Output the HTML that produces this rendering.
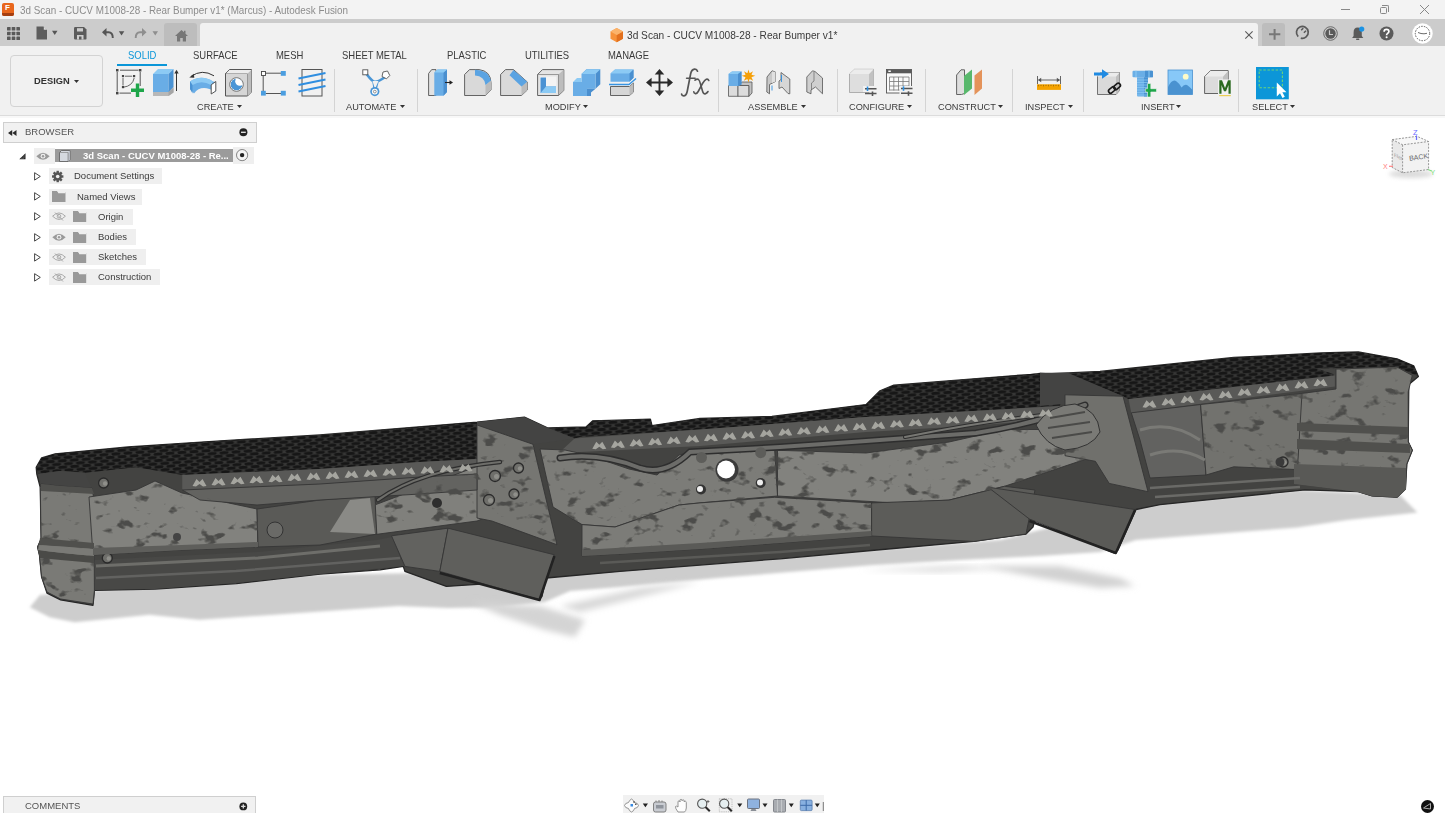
<!DOCTYPE html>
<html><head><meta charset="utf-8">
<style>
*{margin:0;padding:0;box-sizing:border-box}
html,body{width:1445px;height:813px;overflow:hidden;background:#fff;font-family:"Liberation Sans",sans-serif}
.a{position:absolute}
.t{position:absolute;white-space:nowrap;line-height:1}
.rl{font-size:9.8px;color:#3a3a3a;transform:scaleX(0.94);transform-origin:0 0}
.tb{font-size:10.5px;color:#3a3a3a;transform:scaleX(0.9);transform-origin:0 0}
.sep{position:absolute;width:1px;background:#d4d4d4;top:69px;height:43px}
.dd{display:inline-block;width:0;height:0;border-left:2.5px solid transparent;border-right:2.5px solid transparent;border-top:3px solid #333;vertical-align:middle;margin-left:3px;position:relative;top:-1px}
.br{font-size:9.8px;color:#3a3a3a;transform:scaleX(0.97);transform-origin:0 0}
.rowbg{position:absolute;background:#efefef;height:16px}
svg{position:absolute;overflow:visible}
</style></head><body>
<!-- title bar -->
<div class="a" style="left:0;top:0;width:1445px;height:19px;background:#f3f3f3"></div>
<div class="a" style="left:2px;top:3px;width:12px;height:13px;background:#e8661c;border-radius:2px"></div>
<div class="a" style="left:2px;top:13px;width:12px;height:3px;background:#a53e10;border-radius:0 0 2px 2px"></div>
<div class="t" style="left:5px;top:4px;font-size:8px;font-weight:bold;color:#fff">F</div>
<div class="t" style="left:19.5px;top:4.9px;font-size:10.5px;color:#8c8c8c;transform:scaleX(0.94);transform-origin:0 0">3d Scan - CUCV M1008-28 - Rear Bumper v1* (Marcus) - Autodesk Fusion</div>
<div class="a" style="left:1341px;top:9px;width:9px;height:1px;background:#888"></div>
<div class="a" style="left:1380px;top:7px;width:7px;height:7px;border:1px solid #888;border-radius:1.5px"></div>
<div class="a" style="left:1382px;top:5px;width:7px;height:7px;border-top:1px solid #888;border-right:1px solid #888;border-radius:0 2px 0 0"></div>
<svg style="left:1420px;top:5px" width="9" height="9"><path d="M0 0L9 9M9 0L0 9" stroke="#888" stroke-width="1"/></svg>

<!-- app bar -->
<div class="a" style="left:0;top:19px;width:1445px;height:27px;background:#cccccc"></div>
<div class="a" style="left:163.5px;top:23px;width:33px;height:23px;background:#bdbdbd;border-radius:3px 3px 0 0"></div>
<div class="a" style="left:200px;top:22.5px;width:1058px;height:24px;background:#f1f1f1;border-radius:3px 3px 0 0"></div>
<div class="a" style="left:1262px;top:22.5px;width:23px;height:23.5px;background:#bdbdbd;border-radius:3px 3px 0 0"></div>

<!-- app bar icons -->
<svg style="left:7px;top:26.5px" width="13" height="13"><g fill="#595959"><rect x="0" y="0" width="3.6" height="3.6" rx=".6"/><rect x="4.7" y="0" width="3.6" height="3.6" rx=".6"/><rect x="9.4" y="0" width="3.6" height="3.6" rx=".6"/><rect x="0" y="4.7" width="3.6" height="3.6" rx=".6"/><rect x="4.7" y="4.7" width="3.6" height="3.6" rx=".6"/><rect x="9.4" y="4.7" width="3.6" height="3.6" rx=".6"/><rect x="0" y="9.4" width="3.6" height="3.6" rx=".6"/><rect x="4.7" y="9.4" width="3.6" height="3.6" rx=".6"/><rect x="9.4" y="9.4" width="3.6" height="3.6" rx=".6"/></g></svg>
<svg style="left:36px;top:26px" width="22" height="14"><path d="M0.5 0.5H7.5L11 4V13.5H0.5Z" fill="#5e5e5e"/><path d="M7.8 0.6V3.7H10.9" fill="#ddd"/><path d="M16 4.7H21.5L18.75 9Z" fill="#555"/></svg>
<svg style="left:73.5px;top:26.5px" width="13" height="13"><path d="M0 1.2Q0 0 1.2 0H10L12.5 2.5V11.8Q12.5 12.5 11.8 12.5H1.2Q0 12.5 0 11.3Z" fill="#5b5b5b"/><rect x="3" y="1.2" width="6" height="3.3" fill="#cdcdcd"/><rect x="3" y="8" width="6.5" height="4.5" fill="#cdcdcd"/><rect x="5" y="9.5" width="2.5" height="3" fill="#5b5b5b"/></svg>
<svg style="left:102px;top:27.5px" width="24" height="11"><path d="M1.5 4.2H6.5Q10.8 4.2 10.8 10" fill="none" stroke="#555" stroke-width="1.9"/><path d="M0 4.2L4.5 0V8.4Z" fill="#555"/><path d="M16.8 3.3H22.3L19.55 7.4Z" fill="#555"/></svg>
<svg style="left:134.5px;top:27.5px" width="24" height="11"><path d="M10 4.2H5Q0.7 4.2 0.7 10" fill="none" stroke="#8e8e8e" stroke-width="1.9"/><path d="M11.5 4.2L7 0V8.4Z" fill="#8e8e8e"/><path d="M17.5 3.3H23L20.25 7.4Z" fill="#8e8e8e"/></svg>
<svg style="left:174.5px;top:29.5px" width="14" height="12"><path d="M6.5 0L0 6H2V11.5H5.2V8H7.8V11.5H11V6H13L10.5 3.7V0.8H9V2.3Z" fill="#777"/></svg>
<!-- tab -->
<svg style="left:609.5px;top:28px" width="14" height="15"><path d="M6.7 0L13 3.5V10.8L6.7 14.3L0.5 10.8V3.5Z" fill="#f7923a"/><path d="M6.7 7L13 3.5V10.8L6.7 14.3Z" fill="#e2701e"/><path d="M6.7 0L13 3.5L6.7 7L0.5 3.5Z" fill="#fbb36b"/></svg>
<div class="t" style="left:627.4px;top:29.8px;font-size:10.8px;color:#3a3a3a;transform:scaleX(0.94);transform-origin:0 0">3d Scan - CUCV M1008-28 - Rear Bumper v1*</div>
<svg style="left:1245px;top:31px" width="8" height="8"><path d="M0.3 0.3L7.6 7.6M7.6 0.3L0.3 7.6" stroke="#5a5a5a" stroke-width="1.1"/></svg>
<svg style="left:1268.5px;top:29px" width="12" height="11"><path d="M5.6 0V10.7M0 5.35H11.3" stroke="#777" stroke-width="2"/></svg>
<svg style="left:1295px;top:25px" width="15" height="15"><path d="M3.2 11.6A5.9 5.9 0 1 1 5.8 13.1" fill="none" stroke="#5a5a5a" stroke-width="1.7"/><path d="M6.2 5.2L8.3 3.1M8.9 7.8L11 5.7" stroke="#5a5a5a" stroke-width="1.5"/></svg>
<svg style="left:1322.5px;top:25.5px" width="15" height="15"><circle cx="7.5" cy="7.5" r="6.8" fill="none" stroke="#6a6a6a" stroke-width="1"/><circle cx="7.5" cy="7.5" r="5.2" fill="#5a5a5a"/><path d="M6.5 4.3V8.5H10" fill="none" stroke="#ccc" stroke-width="1.2"/></svg>
<svg style="left:1351px;top:26px" width="15" height="15"><path d="M6.7 1.5Q10.8 1.5 10.8 6.5V10L12.3 12H1.1L2.6 10V6.5Q2.6 1.5 6.7 1.5Z" fill="#5a5a5a"/><rect x="5" y="12.6" width="3.4" height="1.4" rx=".7" fill="#5a5a5a"/><circle cx="10.7" cy="3.1" r="2.6" fill="#1b93e4"/></svg>
<svg style="left:1378.5px;top:25.5px" width="15" height="15"><circle cx="7.5" cy="7.5" r="7" fill="#5a5a5a"/><path d="M5.1 5.7Q5.1 3.4 7.5 3.4Q9.9 3.4 9.9 5.5Q9.9 6.8 8.4 7.6Q7.6 8.1 7.6 9.2" fill="none" stroke="#fff" stroke-width="1.7"/><circle cx="7.6" cy="11.3" r="1.05" fill="#fff"/></svg>
<svg style="left:1411.5px;top:22.5px" width="21" height="21"><circle cx="10.5" cy="10.5" r="10.2" fill="#fff"/><circle cx="10.5" cy="10.5" r="7.2" fill="none" stroke="#333" stroke-width=".8" stroke-dasharray="1.5 1.2"/><path d="M6 9.5L9 10.5L12 10.8L15 10.3" stroke="#444" stroke-width=".8" fill="none"/></svg>

<!-- ribbon -->
<div class="a" style="left:0;top:46px;width:1445px;height:69.5px;background:#f1f1f1"></div>
<div class="a" style="left:0;top:115px;width:1445px;height:1px;background:#dcdcdc"></div>
<div class="a" style="left:0;top:116px;width:1445px;height:2px;background:#f8f8f8"></div>
<div class="a" style="left:10px;top:55px;width:92.5px;height:51.5px;border:1px solid #d3d3d3;border-radius:4px"></div>
<div class="t" style="left:34.3px;top:75.6px;font-size:9.8px;font-weight:bold;color:#333;transform:scaleX(0.95);transform-origin:0 0">DESIGN</div>
<svg style="left:74px;top:79.5px" width="6" height="4"><path d="M0 0H5L2.5 3Z" fill="#333"/></svg>
<div class="t tb" style="left:128px;top:50.2px;color:#0a96d8">SOLID</div>
<div class="a" style="left:117px;top:63.5px;width:49.5px;height:2.5px;background:#0a96d8"></div>
<div class="t tb" style="left:193.3px;top:50.2px">SURFACE</div>
<div class="t tb" style="left:276.3px;top:50.2px">MESH</div>
<div class="t tb" style="left:342.4px;top:50.2px">SHEET METAL</div>
<div class="t tb" style="left:446.5px;top:50.2px">PLASTIC</div>
<div class="t tb" style="left:525.1px;top:50.2px">UTILITIES</div>
<div class="t tb" style="left:607.9px;top:50.2px">MANAGE</div>

<div class="t rl" style="left:196.7px;top:102.2px">CREATE</div><svg style="left:237px;top:105px" width="6" height="4"><path d="M0 0H5L2.5 3Z" fill="#333"/></svg>
<div class="t rl" style="left:346px;top:102.2px">AUTOMATE</div><svg style="left:399.5px;top:105px" width="6" height="4"><path d="M0 0H5L2.5 3Z" fill="#333"/></svg>
<div class="t rl" style="left:544.7px;top:102.2px">MODIFY</div><svg style="left:583px;top:105px" width="6" height="4"><path d="M0 0H5L2.5 3Z" fill="#333"/></svg>
<div class="t rl" style="left:748.1px;top:102.2px">ASSEMBLE</div><svg style="left:800.5px;top:105px" width="6" height="4"><path d="M0 0H5L2.5 3Z" fill="#333"/></svg>
<div class="t rl" style="left:848.7px;top:102.2px">CONFIGURE</div><svg style="left:907px;top:105px" width="6" height="4"><path d="M0 0H5L2.5 3Z" fill="#333"/></svg>
<div class="t rl" style="left:937.6px;top:102.2px">CONSTRUCT</div><svg style="left:998px;top:105px" width="6" height="4"><path d="M0 0H5L2.5 3Z" fill="#333"/></svg>
<div class="t rl" style="left:1025.1px;top:102.2px">INSPECT</div><svg style="left:1068px;top:105px" width="6" height="4"><path d="M0 0H5L2.5 3Z" fill="#333"/></svg>
<div class="t rl" style="left:1140.5px;top:102.2px">INSERT</div><svg style="left:1176px;top:105px" width="6" height="4"><path d="M0 0H5L2.5 3Z" fill="#333"/></svg>
<div class="t rl" style="left:1251.9px;top:102.2px">SELECT</div><svg style="left:1290px;top:105px" width="6" height="4"><path d="M0 0H5L2.5 3Z" fill="#333"/></svg>

<div class="sep" style="left:333.5px"></div><div class="sep" style="left:417px"></div><div class="sep" style="left:718px"></div><div class="sep" style="left:836.5px"></div><div class="sep" style="left:924.5px"></div><div class="sep" style="left:1012px"></div><div class="sep" style="left:1083px"></div><div class="sep" style="left:1238px"></div>

<!-- CREATE icons -->
<svg style="left:116px;top:69px" width="28" height="28">
<g stroke="#555" stroke-width="1" fill="none"><path d="M1.2 3V22.5M4 1.2H22.5M24.2 3V17M3.5 24.1H15"/><path d="M7 9V16.5M9 7.2H16.2M7.5 18.2Q16.5 17 18.2 9" stroke-width="0.9"/></g>
<g fill="#444"><rect x="0" y="0" width="2.5" height="2.5"/><rect x="22.9" y="0" width="2.5" height="2.5"/><rect x="0" y="22.9" width="2.5" height="2.5"/><rect x="5.9" y="6" width="2.2" height="2.2"/><rect x="17" y="6" width="2.2" height="2.2"/><rect x="5.9" y="17" width="2.2" height="2.2"/></g>
<path d="M19.8 14.5H23.2V19.6H28V23H23.2V28H19.8V23H15V19.6H19.8Z" fill="#1ea64a"/>
</svg>
<svg style="left:153px;top:69px" width="26" height="28">
<path d="M0 21.5H15.5L20.5 17.5V23.5L15.5 27H0Z" fill="#b8b8b8"/><path d="M15.5 23L20.5 19V23.5L15.5 27Z" fill="#a5a5a5"/>
<path d="M0 5H15.5L20.5 0H5Z" fill="#8ccaf4"/><path d="M0 5H15.5V23H0Z" fill="#69ade6"/><path d="M15.5 5L20.5 0V18L15.5 23Z" fill="#4a93d4"/>
<path d="M23.5 22V3" stroke="#333" stroke-width="1"/><path d="M21.3 4.5L23.5 0.8L25.7 4.5Z" fill="#333"/>
</svg>
<svg style="left:188.5px;top:69.5px" width="28" height="25">
<path d="M2 6.5Q13 -1.5 25 5.8" fill="none" stroke="#333" stroke-width="1"/><path d="M0.3 7.6L4.8 3.8L5.3 7.8Z" fill="#333"/>
<path d="M1 11.5Q12.5 4 24 11.5L26.5 12V22Q12.5 13.5 5 23.5L1 19Z" fill="#69ade6"/>
<path d="M1 11.5Q12.5 4 24 11.5L22 15Q12.5 9.5 3.5 15Z" fill="#8ccaf4"/>
<path d="M1 11.5L3.5 15V23.5L1 19Z" fill="#4a93d4"/>
<path d="M22.2 14.8L26.8 11.5V21L22.2 24Z" fill="#fff" stroke="#444" stroke-width="0.9"/>
</svg>
<svg style="left:225px;top:69px" width="28" height="28">
<path d="M0.5 4.5L4.5 0.5H26.5V23L22.5 27H0.5Z" fill="#d6d6d6" stroke="#555" stroke-width="1"/>
<path d="M0.5 4.5H22.5V27" fill="none" stroke="#555" stroke-width="0.8"/><path d="M22.5 4.5L26.5 0.5V23L22.5 27Z" fill="#bdbdbd"/><path d="M0.9 4.5L4.5 0.9H26.2L22.5 4.5Z" fill="#ececec"/>
<defs><clipPath id="hc"><circle cx="11.5" cy="15.5" r="5.9"/></clipPath></defs><circle cx="11.5" cy="15.5" r="6.8" fill="#fff" stroke="#666" stroke-width="0.9"/><g clip-path="url(#hc)"><circle cx="11.5" cy="15.5" r="5.9" fill="#4b96d6"/><circle cx="14.8" cy="12.2" r="4.6" fill="#fff"/></g>
</svg>
<svg style="left:261px;top:70.5px" width="26" height="25">
<path d="M4.5 2.2H20M2.2 4.5V20.5M4.5 22.5H20" stroke="#555" stroke-width="1"/>
<rect x="0.5" y="0.5" width="4" height="4" fill="#fff" stroke="#444" stroke-width="0.9"/>
<rect x="19.8" y="0" width="5" height="4.8" fill="#4b9ee0"/><rect x="0" y="19.8" width="4.8" height="4.8" fill="#4b9ee0"/><rect x="19.8" y="19.8" width="5" height="4.8" fill="#4b9ee0"/>
</svg>
<svg style="left:297.5px;top:69px" width="28" height="28">
<rect x="4" y="0.5" width="20" height="26.5" fill="none" stroke="#555" stroke-width="1"/>
<path d="M0.5 9.5L27.5 4M0.5 16L27.5 10.5M0.5 22.5L27.5 17" stroke="#2f8ee0" stroke-width="1.9"/>
</svg>

<!-- AUTOMATE -->
<svg style="left:361.5px;top:69px" width="29" height="28">
<g stroke="#4a96d6" stroke-width="2.6" fill="none"><path d="M3.5 3.5Q8 10 11.5 12.5Q15 14 23 8M11.5 12.5Q12.5 17 12.8 22M15.5 12.5L13 22"/></g>
<path d="M10.5 12L16.5 12L13 20Z" fill="#f1f1f1"/>
<rect x="0.8" y="0.8" width="5" height="5" fill="#fff" stroke="#555" stroke-width="0.9"/>
<path d="M21 3L25.5 2L27.8 6.5L24.5 9.8L20 7.5Z" fill="#fff" stroke="#555" stroke-width="0.9"/>
<circle cx="12.8" cy="22.6" r="4.6" fill="#4a96d6"/><circle cx="12.8" cy="22.6" r="2.9" fill="#fff"/><circle cx="12.8" cy="22.6" r="1.4" fill="none" stroke="#666" stroke-width=".7"/>
</svg>
<!-- MODIFY -->
<svg style="left:428px;top:69px" width="26" height="28">
<path d="M0.6 4.5L3.7 0.6H8V26.5H0.6Z" fill="#e2e2e2" stroke="#555" stroke-width="0.9"/>
<path d="M6.3 3.5L9.5 0.5H19V23L15.5 26.8H6.3Z" fill="#69ade6"/><path d="M15.5 3.5L19 0.5V23L15.5 26.8Z" fill="#4a8fcf"/><path d="M6.3 3.5L9.5 0.5H19L15.5 3.5Z" fill="#8ccaf4"/>
<path d="M17 13.5H22.5" stroke="#222" stroke-width="1.1"/><path d="M21.5 11.3L25 13.5L21.5 15.7Z" fill="#222"/>
</svg>
<svg style="left:463.5px;top:69px" width="28" height="28">
<path d="M0.6 5.5L5.5 0.6H15Q26.5 2 27 13.5V21L21.5 26.5H0.6Z" fill="#d9d9d9" stroke="#555" stroke-width="0.9"/>
<path d="M21.5 16V26.5L27 21V11.5Z" fill="#bcbcbc"/>
<path d="M11 0.8Q24 1 27 11.5L21.5 16Q20.5 7 11 6.5Z" fill="#5aa3e2"/>
</svg>
<svg style="left:500px;top:69px" width="28" height="28">
<path d="M0.6 5.5L5.5 0.6H13.5L27.3 13V21L21.5 26.5H0.6Z" fill="#d9d9d9" stroke="#555" stroke-width="0.9"/>
<path d="M21.5 17V26.5L27.3 21V12.5Z" fill="#bcbcbc"/>
<path d="M13.5 1L27.2 12.8L21.5 17.5L9.5 6.3Z" fill="#5aa3e2"/>
</svg>
<svg style="left:536.5px;top:69px" width="28" height="28">
<path d="M0.6 5.5L5.5 0.6H26.8V21.5L21.5 26.5H0.6Z" fill="#e4e4e4" stroke="#555" stroke-width="0.9"/>
<path d="M21.5 5.5L26.6 0.8V21.5L21.5 26.3Z" fill="#bdbdbd"/><path d="M0.6 5.5H21.5V26.5" fill="none" stroke="#666" stroke-width="0.6"/>
<rect x="3" y="7.5" width="16.5" height="16.5" fill="#f4f4f4"/>
<path d="M3.5 8.5H9V17.5H19V24H3.5Z" fill="#4b92d3"/><path d="M9 17.5H19V24H3.5Z" fill="#8ccaf4"/>
</svg>
<svg style="left:572.8px;top:69px" width="28" height="28">
<path d="M8.5 5L13.5 0.3H27.3V15.3L22.5 19.8V5Z" fill="#4a8fcf"/><path d="M8.5 5L13.5 0.3H27.3L22.5 5Z" fill="#8ccaf4"/>
<rect x="8.5" y="5" width="14" height="14.8" fill="#69ade6"/>
<path d="M0 13L4 9H8.5V13Z" fill="#8ccaf4"/><rect x="0" y="13" width="14" height="14" fill="#69ade6"/><path d="M14 19.8H22.5L18 23.5V27H14Z" fill="#4a8fcf"/>
</svg>
<svg style="left:609px;top:69px" width="28" height="28">
<path d="M1.5 26.5V17.5H20.5L24.5 14V23L20.5 26.5Z" fill="#d6d6d6" stroke="#555" stroke-width="0.9"/><path d="M20.5 17.5L24.5 14V23L20.5 26.5Z" fill="#bcbcbc"/>
<path d="M1.5 12.8V4.5L6 0.5H24.5V8.8L20.5 12.8Z" fill="#69ade6"/><path d="M1.5 4.5L6 0.5H24.5L20.5 4.5Z" fill="#8ccaf4"/><path d="M20.5 4.5L24.5 0.5V8.8L20.5 12.8Z" fill="#4a8fcf"/>
<path d="M0 15.5H20L27 9.5" fill="none" stroke="#3794e2" stroke-width="1.4"/>
</svg>
<svg style="left:645.8px;top:69px" width="28" height="28">
<path d="M13.5 3V24M3 13.5H24" stroke="#2a2a2a" stroke-width="1.9"/>
<path d="M13.5 0L18.3 5.6H8.7Z M13.5 27L18.3 21.4H8.7Z M0 13.5L5.6 8.7V18.3Z M27 13.5L21.4 8.7V18.3Z" fill="#2a2a2a"/>
</svg>
<svg style="left:680px;top:68px" width="31" height="30"><g fill="none" stroke="#555" stroke-linecap="round"><path d="M17.5 3.2Q16.8 1 14.5 1.2Q11.5 1.6 10.6 6L7.2 23.5Q6.3 27.8 3.6 27.8Q1.8 27.8 1.6 26.2" stroke-width="1.7"/><path d="M6.5 10.2H15.2" stroke-width="1.4"/><path d="M15 12.2Q17 10.5 18.5 11.5Q19.5 12.3 20.5 16L22.5 23Q23.5 26.5 25.5 25.8Q27.2 25 28 23.5" stroke-width="1.6"/><path d="M28.8 12.5Q28 10.6 26.3 11.2Q24.8 11.8 22.5 15.5L18.2 23.5Q16.8 26 15.2 25.6Q14 25.2 13.8 23.8" stroke-width="1.6"/></g></svg>

<!-- ASSEMBLE -->
<svg style="left:727.5px;top:69px" width="28" height="28">
<path d="M0.5 16.5H10V27.3H0.5Z" fill="#dcdcdc" stroke="#555" stroke-width="0.8"/><path d="M10 16.5H21V27.3H10Z" fill="#dcdcdc" stroke="#555" stroke-width="0.8"/><path d="M10 16.5L14 13H24V24L21 27.3V16.5Z" fill="#c2c2c2" stroke="#555" stroke-width="0.8"/>
<path d="M0.5 5L4 2.5H13.5V15.5L10 17H0.5Z" fill="#69ade6"/><path d="M0.5 5L4 2.5H13.5L10 5Z" fill="#8ccaf4"/><path d="M10 5L13.5 2.5V15.5L10 17Z" fill="#4a8fcf"/>
<path d="M20.5 0.5L21.6 4.2L25 2.2L23.4 5.8L27.3 6.8L23.4 8.3L25.2 11.8L21.6 10L20.5 13.5L19.4 10L15.8 11.8L17.6 8.3L13.7 6.8L17.6 5.8L16 2.2L19.4 4.2Z" fill="#f5a00a"/><circle cx="20.5" cy="7" r="3" fill="#f5a00a"/>
</svg>
<svg style="left:765.5px;top:70px" width="26" height="26">
<path d="M1 7L6 0.8L9.5 2V11.5L3.5 14.5V23.8L0.8 22Z" fill="#c8c8c8" stroke="#555" stroke-width="0.8"/><path d="M6 1.5L9.5 2V11.5L6 13Z" fill="#e0e0e0"/>
<path d="M15 2.5L23.8 9V23.8L22 23.5L16 17L13 18.5V11L15 9.5Z" fill="#d6d6d6" stroke="#555" stroke-width="0.8"/>
<path d="M15.5 5V12M6 15.5V20.5" stroke="#2e8fe0" stroke-width="0.9"/>
</svg>
<svg style="left:805.5px;top:70px" width="18" height="26">
<path d="M0.8 7L6.5 0.8L9 1.5L16.5 8V23.8L9.5 17L5 20V23.8L0.8 22Z" fill="#cfcfcf" stroke="#555" stroke-width="0.8"/><path d="M8 2V11L5.5 13V20" fill="none" stroke="#666" stroke-width="0.7"/>
</svg>
<!-- CONFIGURE -->
<svg style="left:848.5px;top:69px" width="30" height="28">
<path d="M0.5 5L5.5 0.3H24.5V19L20 23.5H0.5Z" fill="#dedede" stroke="#888" stroke-width="0.6"/><path d="M20 5L24.5 0.3V19L20 23.5Z" fill="#c2c2c2"/><path d="M0.5 5L5.5 0.3H24.5L20 5Z" fill="#ececec"/>
<rect x="14" y="17" width="14" height="6" fill="#f1f1f1"/>
<path d="M16 19.7H27.5M16 24.5H27.5" stroke="#555" stroke-width="1.4"/><path d="M18.5 17.5V22" stroke="#2e8fe0" stroke-width="1.6"/><path d="M23.5 22.5V27" stroke="#555" stroke-width="1.6"/>
</svg>
<svg style="left:885.5px;top:69px" width="28" height="28">
<rect x="0.5" y="0.5" width="25" height="23.5" fill="#fafafa" stroke="#555" stroke-width="0.9"/><rect x="0.5" y="0.5" width="25" height="3.8" fill="#5a5a5a"/><rect x="2.3" y="1.5" width="2.5" height="1.5" fill="#fff"/>
<path d="M3.5 8H23M3.5 12.5H23M3.5 17H23M3.5 21H14M3.5 8V21.5M7.8 8V21.5M12.5 8V21.5M17 8V17M23 8V17" stroke="#777" stroke-width="0.8" fill="none"/>
<rect x="13.5" y="17" width="14.5" height="11" fill="#f1f1f1"/>
<path d="M15 19.5H26.5M15 24.3H26.5" stroke="#555" stroke-width="1.4"/><path d="M17.5 17.3V21.8" stroke="#2e8fe0" stroke-width="1.6"/><path d="M22.5 22.3V26.8" stroke="#555" stroke-width="1.6"/>
</svg>

<!-- CONSTRUCT -->
<svg style="left:956px;top:69px" width="28" height="27">
<path d="M0.6 6L5 0.8H8.5V24.5L5.5 25.5H0.6Z" fill="#dedede" stroke="#555" stroke-width="0.9"/>
<path d="M8 7L16 0.5V19.5L8 26Z" fill="#58b86c"/>
<path d="M18.5 6.5L26 0.5V19.5L18.5 26Z" fill="#e4935a"/>
</svg>
<!-- INSPECT -->
<svg style="left:1037px;top:75.5px" width="25" height="15">
<path d="M0.5 0V8M23.5 0V8" stroke="#555" stroke-width="0.9"/><path d="M1.5 4H22.5" stroke="#555" stroke-width="0.9"/><path d="M1 4L4.2 1.8V6.2Z M23 4L19.8 1.8V6.2Z" fill="#555"/>
<rect x="0" y="8.3" width="24" height="5.6" fill="#f5a300"/><path d="M1.5 8.8V10.3M4 8.8V10M6.5 8.8V10.3M9 8.8V10M11.5 8.8V10.3M14 8.8V10M16.5 8.8V10.3M19 8.8V10M21.5 8.8V10.3" stroke="#7a5200" stroke-width="0.6"/>
</svg>
<!-- INSERT -->
<svg style="left:1093.5px;top:69px" width="28" height="28">
<path d="M3.5 7.5L6.5 3.5H25.5V21.5L22 25.5H3.5Z" fill="#dadada" stroke="#555" stroke-width="0.8"/><path d="M22 7.5L25.5 3.5V21.5L22 25.5Z" fill="#c0c0c0"/><path d="M3.5 7.5L6.5 3.5H25.5L22 7.5Z" fill="#ececec"/>
<path d="M0 3.5H8V0.3L15 5L8 9.7V6.5H0Z" fill="#1f8ae2"/>
<g fill="none" stroke="#1a1a1a" stroke-width="1.6"><rect x="14.2" y="18.8" width="7.5" height="4.2" rx="2.1" transform="rotate(-40 18 21)"/><rect x="19.3" y="15.3" width="7.5" height="4.2" rx="2.1" transform="rotate(-40 23 17.4)"/></g>
</svg>
<svg style="left:1131.5px;top:69.5px" width="27" height="28">
<path d="M1.5 0.7H20Q21 0.7 21 2V6.5Q21 7.3 20 7.3H1.5Q0.5 7.3 0.5 6.5V2Q0.5 0.7 1.5 0.7Z" fill="#6aaee6"/><path d="M13 0.7H20Q21 0.7 21 2V7.3H13Z" fill="#4a92d2"/><path d="M4 0.7V7.3M17 0.7V7.3" stroke="#8ccaf4" stroke-width="1"/>
<path d="M5 7.3H16V25.5Q16 26.5 15 26.5H6Q5 26.5 5 25.5Z" fill="#6aaee6"/><path d="M12 7.3H16V26.5H12Z" fill="#4a92d2"/>
<path d="M5 10H16M5 12.5H16M5 15H16M5 17.5H16M5 20H16M5 22.5H16M5 25H16" stroke="#8ccaf4" stroke-width="0.7"/>
<path d="M15.5 13.5H18.8V18.7H24.5V22H18.8V27H15.5V22H13.3V18.7H15.5Z" fill="#1ea64a" stroke="#f1f1f1" stroke-width="0.6"/>
</svg>
<svg style="left:1167.5px;top:70px" width="26" height="25">
<rect x="0" y="0" width="24.5" height="24.5" fill="#87c8f8"/><rect x="0" y="0" width="24.5" height="24.5" fill="none" stroke="#4a92d0" stroke-width="0.8"/>
<circle cx="17.7" cy="6.7" r="2.9" fill="#fdfbc8"/>
<path d="M0 17Q4 9 8 11Q11 13 13.5 17.5Q16 14 19 15Q22 17 24.5 20V24.5H0Z" fill="#4a92d0"/>
</svg>
<svg style="left:1203.5px;top:70px" width="28" height="28">
<path d="M0.6 6.5L6.5 0.6H24.2V19L19 23.5H0.6Z" fill="#dcdcdc" stroke="#555" stroke-width="0.9"/><path d="M19 6.5L24 1V19L19 23.5Z" fill="#c0c0c0"/><path d="M0.9 6.5L6.5 0.9H24L19 6.5Z" fill="#ececec"/>
<rect x="14" y="9.5" width="13.5" height="15" fill="#f1f1f1"/>
<path d="M15.3 23.8V10.3H18L21 18L24 10.3H26.7V23.8H24.5V15L22 21.3H20L17.5 15V23.8Z" fill="#2b6a20"/>
<rect x="15.3" y="25" width="11.5" height="1.2" fill="#eccf55"/>
</svg>
<!-- SELECT -->
<svg style="left:1256px;top:66.5px" width="33" height="33">
<rect x="0" y="0" width="32.8" height="32.3" fill="#0c96d8"/>
<rect x="3.2" y="3" width="23.2" height="17.8" fill="none" stroke="#6cd47a" stroke-width="1.1" stroke-dasharray="2.5 1.6"/>
<path d="M20.8 15.5V29.5L24 26.3L26.5 31L28.8 29.8L26.4 25.2H30.5Z" fill="#fff"/>
</svg>

<!--BUMPER--><svg style="left:0;top:0" width="1445" height="813" viewBox="0 0 1445 813">
<defs><filter id="blur" x="-10%" y="-50%" width="120%" height="200%"><feGaussianBlur stdDeviation="1.8"/></filter><filter id="blur2" x="-50%" y="-50%" width="200%" height="200%"><feGaussianBlur stdDeviation="3"/></filter>
<filter id="mottle" x="0" y="0" width="100%" height="100%" color-interpolation-filters="sRGB"><feTurbulence type="fractalNoise" baseFrequency="0.06 0.09" numOctaves="3" seed="7" result="n"/><feColorMatrix in="n" type="matrix" values="0 0 0 0 0.30  0 0 0 0 0.30  0 0 0 0 0.29  8 0 0 0 -4.8" result="m"/><feComposite in="m" in2="SourceGraphic" operator="in"/></filter>
<pattern id="chk" width="12" height="6.4" patternUnits="userSpaceOnUse" patternTransform="rotate(-4)"><rect width="12" height="6.4" fill="#363635"/><ellipse cx="6" cy="3.2" rx="4.6" ry="1.7" fill="#161616"/><ellipse cx="0" cy="0" rx="4.6" ry="1.7" fill="#161616"/><ellipse cx="12" cy="0" rx="4.6" ry="1.7" fill="#161616"/><ellipse cx="0" cy="6.4" rx="4.6" ry="1.7" fill="#161616"/><ellipse cx="12" cy="6.4" rx="4.6" ry="1.7" fill="#161616"/></pattern>
<pattern id="zz" width="18" height="16" patternUnits="userSpaceOnUse" patternTransform="rotate(-5)"><rect width="18" height="16" fill="#595957"/></pattern>
</defs>
<path d="M29.9 607.3 L49.8 617.3 L74.7 622.3 L149.5 614.8 L199.3 619.8 L274.0 614.8 L398.6 606.0 L448.4 608.0 L500.0 607.0 L545.0 602.0 L570.0 591.0 L620.0 587.0 L720.0 577.8 L870.5 565.3 L960.0 560.0 L1040.0 556.0 L1100.0 552.0 L1136.0 540.0 L1200.0 535.0 L1297.0 527.6 L1347.2 520.1 L1417.4 512.6 L1400.0 495.0 L1300.0 490.0 L1140.0 505.0 L1000.0 540.0 L600.0 570.0 L300.0 575.0 L100.0 590.0 L40.0 595.0Z" fill="#cdcdcd" filter="url(#blur)"/>
<path d="M470 602L540 606L585 620L575 637L545 630L500 615Z" fill="#d4d4d4" filter="url(#blur2)"/><path d="M560 606L640 588L700 582L660 592L580 612Z" fill="#d8d8d8" filter="url(#blur2)"/><path d="M980 566L1060 566L1120 578L1135 586L1100 588L1040 578Z" fill="#d2d2d2" filter="url(#blur2)"/><path d="M860 570L960 566L1010 568L940 572Z" fill="#d8d8d8" filter="url(#blur2)"/>
<path d="M36.2 467.3 L41.6 457.9 L55.2 453.8 L128.0 447.0 L209.0 441.6 L320.0 434.9 L477.0 422.1 L524.4 417.1 L548.0 428.0 L586.0 427.0 L592.8 420.8 L650.4 419.2 L652.0 425.6 L700.0 418.4 L771.9 416.5 L866.0 404.6 L880.0 390.8 L893.8 385.2 L1019.9 375.2 L1100.0 371.4 L1233.8 357.5 L1320.9 353.0 L1358.3 351.9 L1397.0 358.8 L1413.7 365.8 L1418.4 376.4 L1408.8 384.4 L1408.2 441.9 L1412.3 450.2 L1406.8 464.0 L1405.4 489.0 L1397.0 497.2 L1372.2 495.9 L1358.3 491.7 L1304.9 489.9 L1160.0 504.7 L1136.0 509.5 L1118.0 550.0 L1114.0 553.0 L1060.0 531.0 L1036.0 516.0 L1033.0 527.0 L1026.0 534.0 L973.8 541.4 L876.9 550.0 L780.0 558.8 L620.0 571.4 L546.0 578.0 L542.0 596.3 L539.5 599.7 L496.3 583.1 L446.4 586.4 L404.9 571.4 L403.3 566.4 L380.0 569.8 L320.0 574.2 L236.4 583.6 L155.2 589.0 L94.4 590.4 L93.0 605.3 L60.6 599.9 L47.0 593.1 L41.6 576.9 L39.5 555.2 L37.6 547.1 L41.1 539.0 L40.3 487.6 L36.8 474.0Z" fill="#434341" stroke="#262626" stroke-width="1.3" stroke-linejoin="round"/>
<path d="M36.2 467.3 L41.6 457.9 L55.2 453.8 L128.0 447.0 L209.0 441.6 L320.0 434.9 L477.0 422.1 L477.0 459.0 L420.0 462.0 L320.0 469.0 L182.3 475.0 L136.3 467.3 L85.0 472.7 L60.0 471.0 L38.0 474.0Z" fill="url(#chk)"/>
<path d="M548.0 428.0 L586.0 427.0 L592.8 420.8 L650.4 419.2 L652.0 425.6 L700.0 418.4 L771.9 416.5 L866.0 404.6 L880.0 390.8 L893.8 385.2 L1019.9 375.2 L1040.0 372.7 L1067.7 374.0 L1060.0 406.0 L866.0 417.0 L700.0 429.5 L580.0 437.0 L574.6 438.4Z" fill="url(#chk)"/>
<path d="M1067.7 374.0 L1100.0 371.4 L1233.8 357.5 L1320.9 353.0 L1358.3 351.9 L1397.0 358.8 L1413.7 365.8 L1418.4 376.4 L1397.0 367.1 L1316.8 368.5 L1333.4 374.0 L1333.4 383.8 L1131.3 400.4 L1123.0 396.2Z" fill="url(#chk)"/>
<path d="M477.0 422.1 L524.4 417.1 L548.0 428.0 L574.6 438.4 L533.0 444.3 L477.0 425.0Z" fill="#444443"/>
<path d="M1040.0 372.7 L1067.7 372.7 L1123.0 396.2 L1128.6 403.1 L1065.0 404.0 L1040.0 406.0Z" fill="#444443"/>
<path d="M38.0 474.0 L60.0 471.0 L85.0 472.7 L92.0 488.0 L60.0 486.0 L41.0 484.0Z" fill="#444443"/>
<path d="M182.3 475.0 L320.0 469.0 L420.0 462.0 L477.0 459.0 L477.0 474.0 L420.0 477.0 L320.0 484.0 L182.3 490.0Z" fill="url(#zz)"/>
<path d="M574.6 438.4 L700.0 429.5 L866.0 417.0 L1060.0 406.0 L1065.0 418.0 L976.8 425.4 L866.0 432.0 L700.0 446.0 L580.0 452.0 L560.0 452.0Z" fill="url(#zz)"/>
<path d="M1128.6 399.0 L1334.8 375.4 L1334.8 386.5 L1131.3 412.8Z" fill="url(#zz)"/>
<path d="M94 560L258 552L377 540L392 537L404 566L320 574L236 583L155 589L94 590Z" fill="#484846"/>
<path d="M41.0 484.0 L60.0 486.0 L92.0 488.0 L94.0 500.0 L94.4 590.4 L93.0 604.0 L60.6 599.0 L47.0 592.0 L41.6 576.9 L39.5 555.2 L37.6 547.1 L41.1 539.0 L40.3 487.6Z" fill="#7a7a76" stroke="#353535" stroke-width="0.9"/>
<path d="M89.0 497.0 L136.0 490.0 L155.0 481.0 L182.0 493.0 L257.0 509.0 L258.0 547.0 L182.0 550.0 L93.0 555.0Z" fill="#82827e" stroke="#353535" stroke-width="0.9"/>
<path d="M257.0 509.0 L320.0 500.0 L375.0 496.0 L377.0 534.0 L320.0 545.0 L258.0 547.0Z" fill="#5a5a57" stroke="#353535" stroke-width="0.9"/>
<path d="M375.3 504.8 L477.0 466.4 L503.7 459.0 L506.7 509.2 L477.0 521.0 L376.8 534.3Z" fill="#80807c" stroke="#353535" stroke-width="0.9"/>
<path d="M477.0 425.0 L533.0 444.3 L556.9 544.7 L491.9 521.0 L477.0 518.0Z" fill="#767672" stroke="#353535" stroke-width="0.9"/>
<path d="M391.5 535.8 L448.0 528.2 L439.8 571.4 L405.0 566.4Z" fill="#62625f" stroke="#353535" stroke-width="0.9"/>
<path d="M448.0 528.2 L554.4 554.8 L539.5 599.7 L439.8 571.4Z" fill="#5f5f5c" stroke="#353535" stroke-width="0.9"/>
<path d="M540.0 449.0 L565.0 450.0 L588.0 455.0 L629.0 469.0 L657.0 475.0 L679.0 455.0 L700.0 450.3 L774.7 450.3 L777.5 496.0 L700.0 502.9 L679.0 505.0 L615.0 527.0 L582.0 524.6 L553.0 507.0Z" fill="#7c7c78" stroke="#353535" stroke-width="0.9"/>
<path d="M777.5 450.3 L866.0 453.0 L949.0 442.0 L1004.5 429.5 L1060.0 429.5 L1087.5 453.0 L1087.5 458.6 L1004.5 486.3 L949.0 500.1 L893.8 502.9 L777.5 496.0Z" fill="#82827e" stroke="#353535" stroke-width="0.9"/>
<path d="M582.0 524.6 L615.0 527.0 L679.0 505.0 L700.0 502.9 L774.7 497.3 L871.6 502.9 L871.6 536.0 L780.0 543.0 L700.0 549.0 L620.0 554.0 L582.0 556.0Z" fill="#7c7c78" stroke="#353535" stroke-width="0.9"/>
<path d="M871.6 502.9 L949.0 500.1 L1004.5 486.3 L1035.0 490.0 L1026.0 534.0 L973.8 541.4 L871.6 536.0Z" fill="#5c5c59" stroke="#353535" stroke-width="0.9"/>
<path d="M182.3 490.0 L320.0 484.0 L420.0 477.0 L477.0 474.0 L477.0 490.0 L420.0 494.0 L320.0 500.0 L257.0 505.0 L200.0 500.0Z" fill="#636360" stroke="#353535" stroke-width="0.9"/>
<path d="M1131.3 412.8 L1200.6 404.5 L1206.0 475.0 L1150.0 478.0 L1140.0 440.0Z" fill="#626260" stroke="#353535" stroke-width="0.9"/>
<path d="M1065.0 394.8 L1123.0 396.2 L1148.0 491.7 L1109.2 483.4 L1095.4 461.3 L1065.0 455.7Z" fill="#70706c" stroke="#353535" stroke-width="0.9"/>
<path d="M987.9 487.1 L1135.0 509.5 L1115.8 552.7 L1029.5 519.1Z" fill="#5a5a57" stroke="#353535" stroke-width="0.9"/>
<path d="M1200.6 404.5 L1304.4 393.4 L1297.4 469.6 L1233.8 466.8 L1206.0 475.0Z" fill="#72726e" stroke="#353535" stroke-width="0.9"/>
<path d="M1302.0 393.4 L1336.0 389.0 L1336.0 369.0 L1397.0 367.1 L1412.3 375.4 L1408.2 392.0 L1408.2 441.9 L1412.3 450.2 L1406.8 464.0 L1405.4 489.0 L1397.0 497.2 L1372.2 495.9 L1358.3 491.7 L1294.7 483.4 L1297.4 469.6Z" fill="#767672" stroke="#353535" stroke-width="0.9"/>
<g filter="url(#mottle)" fill="#000"><path d="M41.0 484.0 L60.0 486.0 L92.0 488.0 L94.0 500.0 L94.4 590.4 L93.0 604.0 L60.6 599.0 L47.0 592.0 L41.6 576.9 L39.5 555.2 L37.6 547.1 L41.1 539.0 L40.3 487.6Z"/><path d="M89.0 497.0 L136.0 490.0 L155.0 481.0 L182.0 493.0 L257.0 509.0 L258.0 547.0 L182.0 550.0 L93.0 555.0Z"/><path d="M375.3 504.8 L477.0 466.4 L503.7 459.0 L506.7 509.2 L477.0 521.0 L376.8 534.3Z"/><path d="M477.0 425.0 L533.0 444.3 L556.9 544.7 L491.9 521.0 L477.0 518.0Z"/><path d="M540.0 449.0 L565.0 450.0 L588.0 455.0 L629.0 469.0 L657.0 475.0 L679.0 455.0 L700.0 450.3 L774.7 450.3 L777.5 496.0 L700.0 502.9 L679.0 505.0 L615.0 527.0 L582.0 524.6 L553.0 507.0Z"/><path d="M777.5 450.3 L866.0 453.0 L949.0 442.0 L1004.5 429.5 L1060.0 429.5 L1087.5 453.0 L1087.5 458.6 L1004.5 486.3 L949.0 500.1 L893.8 502.9 L777.5 496.0Z"/><path d="M582.0 524.6 L615.0 527.0 L679.0 505.0 L700.0 502.9 L774.7 497.3 L871.6 502.9 L871.6 536.0 L780.0 543.0 L700.0 549.0 L620.0 554.0 L582.0 556.0Z"/><path d="M1200.6 404.5 L1304.4 393.4 L1297.4 469.6 L1233.8 466.8 L1206.0 475.0Z"/><path d="M1302.0 393.4 L1336.0 389.0 L1336.0 369.0 L1397.0 367.1 L1412.3 375.4 L1408.2 392.0 L1408.2 441.9 L1412.3 450.2 L1406.8 464.0 L1405.4 489.0 L1397.0 497.2 L1372.2 495.9 L1358.3 491.7 L1294.7 483.4 L1297.4 469.6Z"/></g>
<g fill="none" stroke-linecap="round"><path d="M560 458Q600 452 640 468Q665 476 690 452L780 447L866 441L976 433Q1030 425 1085 405" stroke="#2e2e2e" stroke-width="7"/><path d="M560 458Q600 452 640 468Q665 476 690 452L780 447L866 441L976 433Q1030 425 1085 405" stroke="#6c6c69" stroke-width="4"/><path d="M905 437Q990 420 1070 412" stroke="#2e2e2e" stroke-width="4"/><path d="M905 437Q990 420 1070 412" stroke="#777773" stroke-width="2"/><path d="M378 500Q420 470 500 462" stroke="#2e2e2e" stroke-width="4.5"/><path d="M378 500Q420 470 500 462" stroke="#6e6e6a" stroke-width="2.2"/></g>
<path d="M1036 425Q1050 405 1075 404Q1098 410 1100 432Q1092 448 1065 450Q1045 445 1036 425Z" fill="#7a7a76" stroke="#333" stroke-width="1"/><path d="M1050 418L1085 412M1048 428L1090 422M1052 438L1092 432" stroke="#4a4a48" stroke-width="2"/>
<path d="M192.5 486.0L196.5 479.0L199.5 482.0L202.5 479.0L206.5 486.0L203.0 486.5L199.5 484.0L196.0 486.5ZM211.5 484.9L215.5 477.9L218.5 480.9L221.5 477.9L225.5 484.9L222.0 485.4L218.5 482.9L215.0 485.4ZM230.5 483.8L234.5 476.8L237.5 479.8L240.5 476.8L244.5 483.8L241.0 484.3L237.5 481.8L234.0 484.3ZM249.5 482.8L253.5 475.8L256.5 478.8L259.5 475.8L263.5 482.8L260.0 483.3L256.5 480.8L253.0 483.3ZM268.5 481.7L272.5 474.7L275.5 477.7L278.5 474.7L282.5 481.7L279.0 482.2L275.5 479.7L272.0 482.2ZM287.5 480.6L291.5 473.6L294.5 476.6L297.5 473.6L301.5 480.6L298.0 481.1L294.5 478.6L291.0 481.1ZM306.5 479.6L310.5 472.6L313.5 475.6L316.5 472.6L320.5 479.6L317.0 480.1L313.5 477.6L310.0 480.1ZM325.5 478.5L329.5 471.5L332.5 474.5L335.5 471.5L339.5 478.5L336.0 479.0L332.5 476.5L329.0 479.0ZM344.5 477.4L348.5 470.4L351.5 473.4L354.5 470.4L358.5 477.4L355.0 477.9L351.5 475.4L348.0 477.9ZM363.5 476.4L367.5 469.4L370.5 472.4L373.5 469.4L377.5 476.4L374.0 476.9L370.5 474.4L367.0 476.9ZM382.5 475.3L386.5 468.3L389.5 471.3L392.5 468.3L396.5 475.3L393.0 475.8L389.5 473.3L386.0 475.8ZM401.5 474.2L405.5 467.2L408.5 470.2L411.5 467.2L415.5 474.2L412.0 474.7L408.5 472.2L405.0 474.7ZM420.5 473.2L424.5 466.2L427.5 469.2L430.5 466.2L434.5 473.2L431.0 473.7L427.5 471.2L424.0 473.7ZM439.5 472.1L443.5 465.1L446.5 468.1L449.5 465.1L453.5 472.1L450.0 472.6L446.5 470.1L443.0 472.6ZM458.5 471.0L462.5 464.0L465.5 467.0L468.5 464.0L472.5 471.0L469.0 471.5L465.5 469.0L462.0 471.5ZM592.3 448.8L596.3 441.8L599.3 444.8L602.3 441.8L606.3 448.8L602.8 449.3L599.3 446.8L595.8 449.3ZM610.9 447.5L614.9 440.5L617.9 443.5L620.9 440.5L624.9 447.5L621.4 448.0L617.9 445.5L614.4 448.0ZM629.5 446.1L633.5 439.1L636.5 442.1L639.5 439.1L643.5 446.1L640.0 446.6L636.5 444.1L633.0 446.6ZM648.1 444.7L652.1 437.7L655.1 440.7L658.1 437.7L662.1 444.7L658.6 445.2L655.1 442.7L651.6 445.2ZM666.7 443.4L670.7 436.4L673.7 439.4L676.7 436.4L680.7 443.4L677.2 443.9L673.7 441.4L670.2 443.9ZM685.3 442.0L689.3 435.0L692.3 438.0L695.3 435.0L699.3 442.0L695.8 442.5L692.3 440.0L688.8 442.5ZM703.9 440.7L707.9 433.7L710.9 436.7L713.9 433.7L717.9 440.7L714.4 441.2L710.9 438.7L707.4 441.2ZM722.5 439.3L726.5 432.3L729.5 435.3L732.5 432.3L736.5 439.3L733.0 439.8L729.5 437.3L726.0 439.8ZM741.1 437.9L745.1 430.9L748.1 433.9L751.1 430.9L755.1 437.9L751.6 438.4L748.1 435.9L744.6 438.4ZM759.7 436.6L763.7 429.6L766.7 432.6L769.7 429.6L773.7 436.6L770.2 437.1L766.7 434.6L763.2 437.1ZM778.3 435.2L782.3 428.2L785.3 431.2L788.3 428.2L792.3 435.2L788.8 435.7L785.3 433.2L781.8 435.7ZM796.9 433.9L800.9 426.9L803.9 429.9L806.9 426.9L810.9 433.9L807.4 434.4L803.9 431.9L800.4 434.4ZM815.5 432.5L819.5 425.5L822.5 428.5L825.5 425.5L829.5 432.5L826.0 433.0L822.5 430.5L819.0 433.0ZM834.1 431.1L838.1 424.1L841.1 427.1L844.1 424.1L848.1 431.1L844.6 431.6L841.1 429.1L837.6 431.6ZM852.7 429.8L856.7 422.8L859.7 425.8L862.7 422.8L866.7 429.8L863.2 430.3L859.7 427.8L856.2 430.3ZM871.3 428.4L875.3 421.4L878.3 424.4L881.3 421.4L885.3 428.4L881.8 428.9L878.3 426.4L874.8 428.9ZM889.9 427.1L893.9 420.1L896.9 423.1L899.9 420.1L903.9 427.1L900.4 427.6L896.9 425.1L893.4 427.6ZM908.5 425.7L912.5 418.7L915.5 421.7L918.5 418.7L922.5 425.7L919.0 426.2L915.5 423.7L912.0 426.2ZM927.1 424.3L931.1 417.3L934.1 420.3L937.1 417.3L941.1 424.3L937.6 424.8L934.1 422.3L930.6 424.8ZM945.7 423.0L949.7 416.0L952.7 419.0L955.7 416.0L959.7 423.0L956.2 423.5L952.7 421.0L949.2 423.5ZM964.3 421.6L968.3 414.6L971.3 417.6L974.3 414.6L978.3 421.6L974.8 422.1L971.3 419.6L967.8 422.1ZM982.9 420.3L986.9 413.3L989.9 416.3L992.9 413.3L996.9 420.3L993.4 420.8L989.9 418.3L986.4 420.8ZM1001.5 418.9L1005.5 411.9L1008.5 414.9L1011.5 411.9L1015.5 418.9L1012.0 419.4L1008.5 416.9L1005.0 419.4ZM1020.1 417.5L1024.1 410.5L1027.1 413.5L1030.1 410.5L1034.1 417.5L1030.6 418.0L1027.1 415.5L1023.6 418.0ZM1038.7 416.2L1042.7 409.2L1045.7 412.2L1048.7 409.2L1052.7 416.2L1049.2 416.7L1045.7 414.2L1042.2 416.7ZM1142.5 407.3L1146.5 400.3L1149.5 403.3L1152.5 400.3L1156.5 407.3L1153.0 407.8L1149.5 405.3L1146.0 407.8ZM1161.5 404.9L1165.5 397.9L1168.5 400.9L1171.5 397.9L1175.5 404.9L1172.0 405.4L1168.5 402.9L1165.0 405.4ZM1180.5 402.5L1184.5 395.5L1187.5 398.5L1190.5 395.5L1194.5 402.5L1191.0 403.0L1187.5 400.5L1184.0 403.0ZM1199.5 400.1L1203.5 393.1L1206.5 396.1L1209.5 393.1L1213.5 400.1L1210.0 400.6L1206.5 398.1L1203.0 400.6ZM1218.5 397.7L1222.5 390.7L1225.5 393.7L1228.5 390.7L1232.5 397.7L1229.0 398.2L1225.5 395.7L1222.0 398.2ZM1237.5 395.3L1241.5 388.3L1244.5 391.3L1247.5 388.3L1251.5 395.3L1248.0 395.8L1244.5 393.3L1241.0 395.8ZM1256.5 392.9L1260.5 385.9L1263.5 388.9L1266.5 385.9L1270.5 392.9L1267.0 393.4L1263.5 390.9L1260.0 393.4ZM1275.5 390.5L1279.5 383.5L1282.5 386.5L1285.5 383.5L1289.5 390.5L1286.0 391.0L1282.5 388.5L1279.0 391.0ZM1294.5 388.1L1298.5 381.1L1301.5 384.1L1304.5 381.1L1308.5 388.1L1305.0 388.6L1301.5 386.1L1298.0 388.6ZM1313.5 385.7L1317.5 378.7L1320.5 381.7L1323.5 378.7L1327.5 385.7L1324.0 386.2L1320.5 383.7L1317.0 386.2Z" fill="#a5a59f"/>
<path d="M40 538Q60 540 94 543L94 549Q60 546 39 545Z" fill="#50504d"/><path d="M38 550Q60 553 94 556L94 563Q60 560 40 558Z" fill="#4a4a47"/><path d="M39 545Q60 547 94 549V556Q60 553 38 550Z" fill="#7a7a76"/><path d="M41 484L60 486L92 488L94 494L60 492L41 491Z" fill="#50504d"/><path d="M1297 423L1408 427V435L1297 431Z" fill="#50504d"/><path d="M1297 439L1410 444V453L1297 449Z" fill="#50504d"/><path d="M1294 464L1406 468V489L1397 497.2L1372 496L1358 492L1294 484Z" fill="#595956"/>
<circle cx="727" cy="470" r="11.5" fill="#3a3a3a"/><circle cx="726" cy="469.5" r="9" fill="#fff"/><circle cx="701" cy="489.5" r="5" fill="#333"/><circle cx="700" cy="489" r="3" fill="#eee"/><circle cx="760.7" cy="483" r="5" fill="#333"/><circle cx="760" cy="482.5" r="3" fill="#eee"/><circle cx="701.5" cy="457.5" r="5.5" fill="#5d5d5a"/><circle cx="760.7" cy="452.7" r="5.5" fill="#5d5d5a"/>
<path d="M96 566L258 558L380 546" stroke="#6e6e6a" stroke-width="3" fill="none"/><path d="M96 578L236 571L400 558" stroke="#626260" stroke-width="2.5" fill="none"/><path d="M600 563L780 552L870 545" stroke="#5a5a57" stroke-width="2.5" fill="none"/>
<path d="M330 532L350 500L370 498L375 534Z" fill="#8a8a86"/><circle cx="275" cy="530" r="8" fill="#6a6a67" stroke="#333" stroke-width="1"/>
<path d="M1150 488L1300 478M1155 497L1300 487" stroke="#6a6a67" stroke-width="2.5" fill="none"/><path d="M1140 430Q1170 420 1200 440M1150 455Q1180 445 1205 460" stroke="#7a7a76" stroke-width="3" fill="none"/>
<circle cx="495" cy="476" r="5.5" fill="#6f6f6b" stroke="#2a2a2a" stroke-width="1.3"/><circle cx="496.5" cy="476.5" r="2.5" fill="#8f8f8a"/><circle cx="489" cy="500" r="5.5" fill="#6f6f6b" stroke="#2a2a2a" stroke-width="1.3"/><circle cx="490.5" cy="500.5" r="2.5" fill="#8f8f8a"/><circle cx="518.5" cy="468" r="5" fill="#6f6f6b" stroke="#2a2a2a" stroke-width="1.3"/><circle cx="520.0" cy="468.5" r="2.2" fill="#8f8f8a"/><circle cx="514" cy="494" r="5" fill="#6f6f6b" stroke="#2a2a2a" stroke-width="1.3"/><circle cx="515.5" cy="494.5" r="2.2" fill="#8f8f8a"/><circle cx="103.6" cy="483" r="5" fill="#6f6f6b" stroke="#2a2a2a" stroke-width="1.3"/><circle cx="105.1" cy="483.5" r="2.2" fill="#8f8f8a"/><circle cx="107.3" cy="558" r="5" fill="#6f6f6b" stroke="#2a2a2a" stroke-width="1.3"/><circle cx="108.8" cy="558.5" r="2.2" fill="#8f8f8a"/><circle cx="1283" cy="462" r="5" fill="#6f6f6b" stroke="#2a2a2a" stroke-width="1.3"/><circle cx="1284.5" cy="462.5" r="2.2" fill="#8f8f8a"/>
<path d="M582 550L700 543L871.6 531V536L780 543L700 549L620 554L582 556Z" fill="#5a5a57"/><path d="M93 548L182 545L258 542V547L182 550L93 555Z" fill="#5e5e5b"/>
<path d="M1029.5 521L1115.8 553L1135 510" stroke="#222" stroke-width="2.5" fill="none" stroke-linejoin="round"/><path d="M439.8 573L539.5 600L554.4 556" stroke="#222" stroke-width="2.5" fill="none" stroke-linejoin="round"/>
<circle cx="437" cy="503" r="5" fill="#2e2e2e"/><circle cx="177" cy="537" r="4" fill="#444"/><circle cx="1280" cy="462" r="4.5" fill="#3a3a3a"/>
</svg><!--/BUMPER-->
<!-- BROWSER -->
<div class="a" style="left:3.4px;top:122.2px;width:253.5px;height:20.6px;background:#f1f1f1;border:1px solid #cfcfcf"></div>
<svg style="left:7.5px;top:130px" width="10" height="7"><path d="M0 3L4.2 0V6Z M4.3 3L8.5 0V6Z" fill="#2a2a2a"/></svg>
<div class="t br" style="left:24.7px;top:127.4px;color:#555">BROWSER</div>
<svg style="left:239px;top:128px" width="9" height="9"><circle cx="4.4" cy="4.3" r="4" fill="#222"/><rect x="2" y="3.6" width="4.8" height="1.4" fill="#ddd"/></svg>
<!-- root row -->
<svg style="left:18.5px;top:152.5px" width="8" height="7"><path d="M6.5 0.3V6.3H0.3Z" fill="#1e1e1e"/><path d="M5 2V5.2H1.8" fill="none" stroke="#888" stroke-width=".6"/></svg>
<div class="a" style="left:34px;top:147.5px;width:21px;height:16.5px;background:#efefef"></div>
<svg style="left:36px;top:151.5px" width="15" height="9"><path d="M0.3 4.2Q7 -2.8 13.7 4.2Q7 11.2 0.3 4.2Z" fill="#9a9a9a"/><circle cx="7" cy="4.2" r="2.4" fill="#efefef"/><circle cx="7" cy="4.2" r="1.2" fill="#9a9a9a"/></svg>
<div class="a" style="left:55px;top:149.2px;width:177.7px;height:13.3px;background:#9b9b9b"></div>
<svg style="left:58.5px;top:149.5px" width="12" height="12"><path d="M0.5 2.5L2.5 0.5H11V9.5L9 11.5H0.5Z" fill="#d5d9e0" stroke="#5a5a5a" stroke-width=".8"/><path d="M9 2.5L11 0.5V9.5L9 11.5Z" fill="#b9bdc5"/><path d="M0.5 2.5H9V11.5" fill="none" stroke="#777" stroke-width=".6"/></svg>
<div class="t br" style="left:82.8px;top:151px;font-weight:bold;color:#fff">3d Scan - CUCV M1008-28 - Re...</div>
<div class="a" style="left:232.7px;top:147.4px;width:21.3px;height:16.9px;background:#efefef"></div>
<svg style="left:236px;top:149.3px" width="13" height="13"><circle cx="6.1" cy="6.1" r="5.6" fill="#f4f4f4" stroke="#777" stroke-width=".9"/><circle cx="6.1" cy="6.1" r="2.2" fill="#222"/></svg>
<svg style="left:33.8px;top:171.9px" width="8" height="10"><path d="M0.6 0.7L6.3 4.4L0.6 8.1Z" fill="#fff" stroke="#333" stroke-width="0.9"/></svg>
<div class="a" style="left:49.1px;top:168.2px;width:113.1px;height:16px;background:#efefef"></div>
<svg style="left:51.5px;top:170.7px" width="12" height="12"><g transform="translate(5.7 5.5)" fill="#555"><circle r="4.2"/><g id="tt"><rect x="-1.2" y="-5.7" width="2.4" height="11.4"/><rect x="-1.2" y="-5.7" width="2.4" height="11.4" transform="rotate(45)"/><rect x="-1.2" y="-5.7" width="2.4" height="11.4" transform="rotate(90)"/><rect x="-1.2" y="-5.7" width="2.4" height="11.4" transform="rotate(135)"/></g><circle r="1.8" fill="#efefef"/></g></svg>
<div class="t br" style="left:73.5px;top:171.4px">Document Settings</div>
<svg style="left:33.8px;top:192.2px" width="8" height="10"><path d="M0.6 0.7L6.3 4.4L0.6 8.1Z" fill="#fff" stroke="#333" stroke-width="0.9"/></svg>
<div class="a" style="left:49.1px;top:188.5px;width:92.9px;height:16px;background:#efefef"></div>
<svg style="left:51.7px;top:191.2px" width="14" height="12"><path d="M0 0H5L5.5 1H13.5V11H0Z" fill="#999"/><path d="M5.8 1.1H13.5V2.2H6.3Z" fill="#efefef"/></svg>
<div class="t br" style="left:77.1px;top:191.7px">Named Views</div>
<svg style="left:33.8px;top:212.4px" width="8" height="10"><path d="M0.6 0.7L6.3 4.4L0.6 8.1Z" fill="#fff" stroke="#333" stroke-width="0.9"/></svg>
<div class="a" style="left:49.1px;top:208.7px;width:83.5px;height:16px;background:#efefef"></div>
<svg style="left:51.5px;top:212.2px" width="15" height="10"><path d="M0.6 4.2Q7 -2.3 13.4 4.2Q7 10.7 0.6 4.2Z" fill="none" stroke="#aaa" stroke-width="1"/><circle cx="7" cy="4.2" r="1.8" fill="none" stroke="#aaa" stroke-width="1"/><path d="M3 0.5L11 8.5" stroke="#aaa" stroke-width="1"/></svg>
<svg style="left:73px;top:211.4px" width="14" height="12"><path d="M0 0H5L5.5 1H13.2V11H0Z" fill="#999"/><path d="M5.8 1.1H13.2V2.2H6.3Z" fill="#efefef"/></svg>
<div class="t br" style="left:98.4px;top:211.9px">Origin</div>
<svg style="left:33.8px;top:232.8px" width="8" height="10"><path d="M0.6 0.7L6.3 4.4L0.6 8.1Z" fill="#fff" stroke="#333" stroke-width="0.9"/></svg>
<div class="a" style="left:49.1px;top:229.1px;width:86.9px;height:16px;background:#efefef"></div>
<svg style="left:51.5px;top:232.6px" width="15" height="9"><path d="M0.3 4.2Q7 -2.8 13.7 4.2Q7 11.2 0.3 4.2Z" fill="#9a9a9a"/><circle cx="7" cy="4.2" r="2.4" fill="#efefef"/><circle cx="7" cy="4.2" r="1.2" fill="#9a9a9a"/></svg>
<svg style="left:73px;top:231.8px" width="14" height="12"><path d="M0 0H5L5.5 1H13.2V11H0Z" fill="#999"/><path d="M5.8 1.1H13.2V2.2H6.3Z" fill="#efefef"/></svg>
<div class="t br" style="left:98.4px;top:232.3px">Bodies</div>
<svg style="left:33.8px;top:252.9px" width="8" height="10"><path d="M0.6 0.7L6.3 4.4L0.6 8.1Z" fill="#fff" stroke="#333" stroke-width="0.9"/></svg>
<div class="a" style="left:49.1px;top:249.2px;width:97.0px;height:16px;background:#efefef"></div>
<svg style="left:51.5px;top:252.7px" width="15" height="10"><path d="M0.6 4.2Q7 -2.3 13.4 4.2Q7 10.7 0.6 4.2Z" fill="none" stroke="#aaa" stroke-width="1"/><circle cx="7" cy="4.2" r="1.8" fill="none" stroke="#aaa" stroke-width="1"/><path d="M3 0.5L11 8.5" stroke="#aaa" stroke-width="1"/></svg>
<svg style="left:73px;top:251.9px" width="14" height="12"><path d="M0 0H5L5.5 1H13.2V11H0Z" fill="#999"/><path d="M5.8 1.1H13.2V2.2H6.3Z" fill="#efefef"/></svg>
<div class="t br" style="left:98.4px;top:252.4px">Sketches</div>
<svg style="left:33.8px;top:272.9px" width="8" height="10"><path d="M0.6 0.7L6.3 4.4L0.6 8.1Z" fill="#fff" stroke="#333" stroke-width="0.9"/></svg>
<div class="a" style="left:49.1px;top:269.2px;width:110.5px;height:16px;background:#efefef"></div>
<svg style="left:51.5px;top:272.7px" width="15" height="10"><path d="M0.6 4.2Q7 -2.3 13.4 4.2Q7 10.7 0.6 4.2Z" fill="none" stroke="#aaa" stroke-width="1"/><circle cx="7" cy="4.2" r="1.8" fill="none" stroke="#aaa" stroke-width="1"/><path d="M3 0.5L11 8.5" stroke="#aaa" stroke-width="1"/></svg>
<svg style="left:73px;top:271.9px" width="14" height="12"><path d="M0 0H5L5.5 1H13.2V11H0Z" fill="#999"/><path d="M5.8 1.1H13.2V2.2H6.3Z" fill="#efefef"/></svg>
<div class="t br" style="left:98.4px;top:272.4px">Construction</div>

<!-- COMMENTS -->
<div class="a" style="left:3.4px;top:796px;width:253px;height:20px;background:#f1f1f1;border:1px solid #cfcfcf"></div>
<div class="t br" style="left:24.7px;top:801.2px;color:#555">COMMENTS</div>
<svg style="left:239px;top:802px" width="9" height="9"><circle cx="4.3" cy="4.4" r="3.9" fill="#222"/><path d="M4.3 2.2V6.6M2.1 4.4H6.5" stroke="#ddd" stroke-width="1.3"/></svg>

<!-- VIEWCUBE -->
<svg style="left:1378px;top:124px" width="64" height="58">
<defs><filter id="vcs" x="-50%" y="-50%" width="200%" height="200%"><feGaussianBlur stdDeviation="2"/></filter></defs>
<ellipse cx="33" cy="50" rx="22" ry="4" fill="#999" opacity="0.35" filter="url(#vcs)"/>
<path d="M14.2 15.6L24.6 20.8V48.8L14.2 43.5Z" fill="#e9e9e9"/>
<path d="M24.6 20.8L50.6 17.5V45.5L24.6 48.8Z" fill="#f2f2f2"/>
<path d="M14.2 15.6L39 12.3L50.6 17.5L24.6 20.8Z" fill="#f7f7f7"/>
<g fill="none" stroke="#8a8a8a" stroke-width="0.9" stroke-dasharray="2 1.3"><path d="M14.2 15.6L39 12.3L50.6 17.5V45.5L24.6 48.8L14.2 43.5Z"/><path d="M14.2 15.6L24.6 20.8L50.6 17.5M24.6 20.8V48.8"/></g>
<text x="31" y="36" font-family="Liberation Sans" font-size="7" fill="#6a6a6a" transform="rotate(-8 37 33)">BACK</text>
<text x="16" y="33" font-family="Liberation Sans" font-size="5" fill="#999" transform="skewY(25) translate(0 -8)">Flet</text>
<text x="35" y="11" font-family="Liberation Sans" font-size="7.5" fill="#6b6bff">Z</text><path d="M38.5 11.5V16" stroke="#6b6bff" stroke-width="1.2"/>
<text x="5" y="45" font-family="Liberation Sans" font-size="7" fill="#ff8080">X</text><path d="M11 42.3H15" stroke="#ff8080" stroke-width="1.2"/>
<text x="52.5" y="51" font-family="Liberation Sans" font-size="7" fill="#80e080">Y</text><path d="M50 45.5L53.5 47" stroke="#80e080" stroke-width="1.2"/>
</svg>
<!-- NAV BAR -->
<div class="a" style="left:622.6px;top:795.1px;width:201px;height:18px;background:#f1f1f1"></div>
<svg style="left:622px;top:797px" width="202" height="16">
<g transform="translate(3 1.5)"><path d="M6.5 0.5Q9 2 9.5 4Q13 4.5 13.5 7Q13 9.5 9.5 10Q9 12.5 6.5 13.5Q4 12.5 3.5 10Q0 9.5 -0.5 7Q0 4.5 3.5 4Q4 2 6.5 0.5Z" fill="#fbfbfb" stroke="#888" stroke-width="0.9"/><rect x="5.5" y="5.5" width="2.5" height="2.5" fill="#3a8ae0"/><circle cx="9" cy="3.5" r=".8" fill="#333"/><circle cx="10.8" cy="5.8" r=".8" fill="#333"/></g>
<path d="M20.8 6.5H26L23.4 10.3Z" fill="#222"/>
<g transform="translate(31 3)"><rect x="0.5" y="2" width="12.5" height="10" rx="2" fill="#c9ccd2" stroke="#777" stroke-width="0.9"/><rect x="3" y="5" width="7.5" height="3.5" fill="#8f949c"/><path d="M3 2V0.5M6 2V0M9 2V0.5" stroke="#777" stroke-width=".9"/></g>
<g transform="translate(53 2)"><path d="M3 13Q0 9 0.5 7.5Q1.5 6.5 3 8V3Q3 1.8 4 1.8Q5 1.8 5 3V1.3Q5 0.3 6 0.3Q7 0.3 7 1.3V1.8Q7.3 0.8 8.2 0.8Q9.2 0.8 9.2 2V3Q9.5 2 10.4 2.2Q11.3 2.4 11.3 3.6V9Q11 12 9.5 13Z" fill="#fdfdfd" stroke="#888" stroke-width="0.9"/></g>
<g transform="translate(75 1.5)"><circle cx="5.2" cy="5.2" r="4.6" fill="#e5eef0" stroke="#555" stroke-width="1.1"/><path d="M8.5 8.5L12.8 12.8" stroke="#2a2a2a" stroke-width="2"/><path d="M11 1.5V4.5M9.5 3H12.5" stroke="#555" stroke-width=".8"/></g>
<g transform="translate(97 1.5)"><rect x="0.3" y="0.3" width="12.7" height="13" fill="none" stroke="#999" stroke-width=".6" stroke-dasharray="1.2 1"/><circle cx="5.2" cy="5.2" r="4.6" fill="#e5eef0" stroke="#555" stroke-width="1.1"/><path d="M8.5 8.5L12.8 12.8" stroke="#2a2a2a" stroke-width="2"/></g>
<path d="M115.2 6.5H120.3L117.7 10.3Z" fill="#222"/>
<g transform="translate(125 1.5)"><rect x="0.5" y="0.5" width="12" height="9.5" rx="1" fill="#8fb2df" stroke="#6c7380" stroke-width="1"/><path d="M4.5 10.5L3.5 12.5H9.5L8.5 10.5Z" fill="#8a8f96"/></g>
<path d="M140.5 6.5H145.5L143 10.3Z" fill="#222"/>
<g transform="translate(151 2)"><rect x="0.5" y="0.5" width="12" height="12.5" rx="1" fill="#a9acb1" stroke="#7c7f84" stroke-width=".9"/><path d="M4.5 0.5V13M8.5 0.5V13" stroke="#d0d2d5" stroke-width=".7"/></g>
<path d="M166.8 6.5H171.8L169.3 10.3Z" fill="#222"/>
<g transform="translate(178 2.8)"><rect x="0.3" y="0.3" width="11.8" height="10.5" rx="1" fill="#88b0e0" stroke="#5a7fb0" stroke-width=".8"/><path d="M6.2 0.3V10.8M0.3 5.5H12.1" stroke="#3c6aa8" stroke-width="1"/></g>
<path d="M192.8 6.5H197.8L195.3 10.3Z" fill="#222"/>
<path d="M201.3 5V14" stroke="#777" stroke-width="1"/>
</svg>
<svg style="left:1420px;top:799px" width="16" height="14"><circle cx="7.5" cy="7.5" r="6.5" fill="#111"/><path d="M3.5 9L10.5 4.5V10Z" fill="none" stroke="#aaa" stroke-width="1"/></svg>
</body></html>
